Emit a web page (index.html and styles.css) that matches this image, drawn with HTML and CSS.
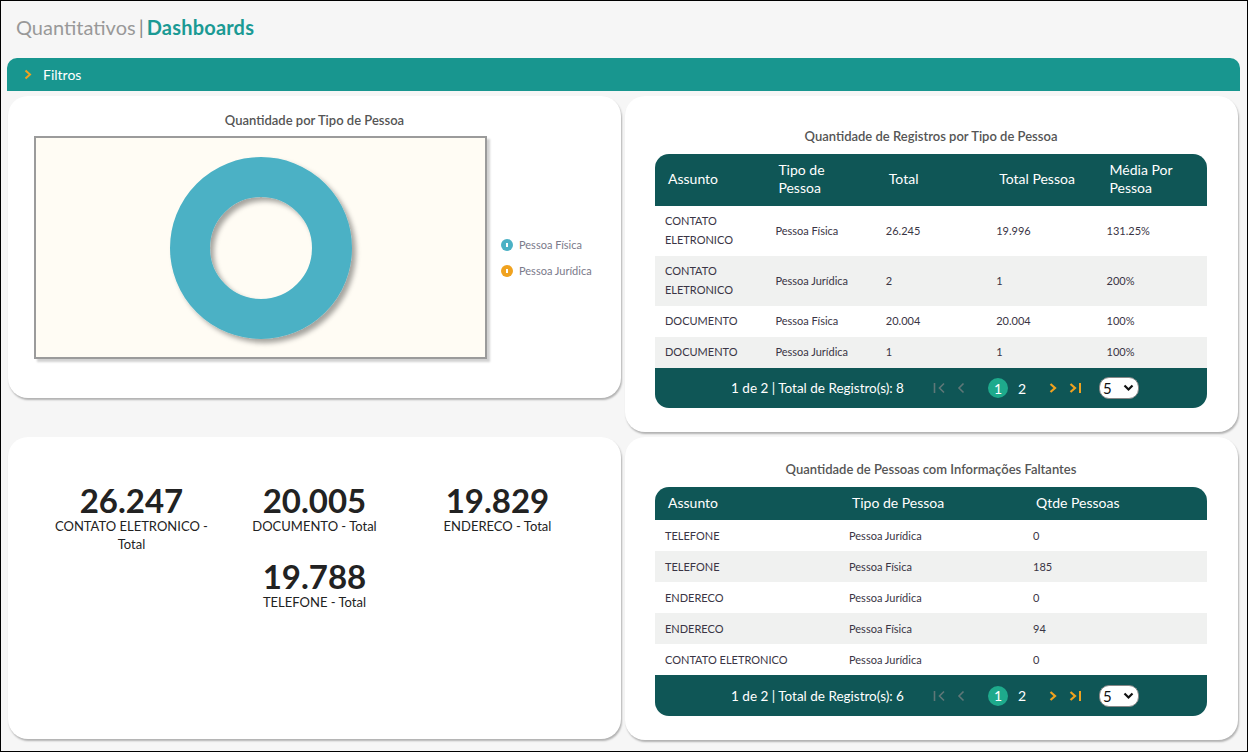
FILE: index.html
```html
<!DOCTYPE html>
<html lang="pt-BR">
<head>
<meta charset="utf-8">
<title>Quantitativos | Dashboards</title>
<link rel="stylesheet" href="styles.css">
</head>
<body>
<div class="frame">
  <h1 class="page-title"><span class="pt-muted">Quantitativos</span><span class="pt-sep">|</span><span class="pt-strong">Dashboards</span></h1>
  <div class="filter-bar">
    <svg class="filter-chevron" width="8" height="11" viewBox="0 0 8 11"><path d="M1.5 1.5 L6 5.5 L1.5 9.5" fill="none" stroke="#f0a21f" stroke-width="2"/></svg>
    <span class="filter-label">Filtros</span>
  </div>

  <div class="grid">
    <section class="card card-chart">
      <h2 class="card-title">Quantidade por Tipo de Pessoa</h2>
      <div class="chart-row">
        <div class="chart-box">
          <svg class="donut" width="220" height="220" viewBox="0 0 220 220">
            <defs>
              <filter id="sh" x="-20%" y="-20%" width="150%" height="150%">
                <feDropShadow dx="4" dy="4" stdDeviation="2.5" flood-color="#000" flood-opacity="0.35"/>
              </filter>
            </defs>
            <circle cx="110" cy="110" r="71" fill="none" stroke="#4bb1c5" stroke-width="40" filter="url(#sh)"/>
          </svg>
        </div>
        <ul class="legend">
          <li class="legend-item"><svg width="12" height="12" viewBox="0 0 12 12"><circle cx="6" cy="6" r="6" fill="#4bb1c5"/><rect x="5" y="4" width="2" height="4" fill="#fff"/></svg><span>Pessoa Física</span></li>
          <li class="legend-item"><svg width="12" height="12" viewBox="0 0 12 12"><circle cx="6" cy="6" r="6" fill="#f0a21f"/><rect x="5" y="4" width="2" height="4" fill="#fff"/></svg><span>Pessoa Jurídica</span></li>
        </ul>
      </div>
    </section>

    <section class="card card-table card-t1">
      <h2 class="card-title">Quantidade de Registros por Tipo de Pessoa</h2>
      <div class="table-wrap">
        <table class="data">
          <thead>
            <tr><th>Assunto</th><th>Tipo de Pessoa</th><th>Total</th><th>Total Pessoa</th><th>Média Por Pessoa</th></tr>
          </thead>
          <tbody>
            <tr><td>CONTATO ELETRONICO</td><td>Pessoa Física</td><td>26.245</td><td>19.996</td><td>131.25%</td></tr>
            <tr class="alt"><td>CONTATO ELETRONICO</td><td>Pessoa Jurídica</td><td>2</td><td>1</td><td>200%</td></tr>
            <tr><td>DOCUMENTO</td><td>Pessoa Física</td><td>20.004</td><td>20.004</td><td>100%</td></tr>
            <tr class="alt"><td>DOCUMENTO</td><td>Pessoa Jurídica</td><td>1</td><td>1</td><td>100%</td></tr>
          </tbody>
        </table>
        <div class="pager">
          <span class="pager-info">1 de 2 | Total de Registro(s): 8</span>
          <span class="pager-nav">
            <svg class="pg-ico" width="13" height="12" viewBox="0 0 13 12"><path d="M1.5 1 V11 M11 1.5 L6.5 6 L11 10.5" fill="none" stroke="#5f7777" stroke-width="1.6"/></svg>
            <svg class="pg-ico pg-prev" width="8" height="12" viewBox="0 0 8 12"><path d="M6.5 1.5 L2 6 L6.5 10.5" fill="none" stroke="#5f7777" stroke-width="1.6"/></svg>
            <span class="pg-num pg-active">1</span>
            <span class="pg-num">2</span>
            <svg class="pg-ico pg-next" width="8" height="12" viewBox="0 0 8 12"><path d="M1.5 2 L6 6 L1.5 10" fill="none" stroke="#f0a21f" stroke-width="2.2"/></svg>
            <svg class="pg-ico" width="13" height="12" viewBox="0 0 13 12"><path d="M1.5 2 L6 6 L1.5 10" fill="none" stroke="#f0a21f" stroke-width="2.2"/><path d="M11 1 V11" fill="none" stroke="#f0a21f" stroke-width="2"/></svg>
            <span class="pg-select">5<svg width="11" height="8" viewBox="0 0 11 8"><path d="M1.5 1.5 L5.5 5.5 L9.5 1.5" fill="none" stroke="#111" stroke-width="2.2"/></svg></span>
          </span>
        </div>
      </div>
    </section>

    <section class="card card-numbers">
      <div class="kpis">
        <div class="kpi"><div class="kpi-value">26.247</div><div class="kpi-label">CONTATO ELETRONICO - Total</div></div>
        <div class="kpi"><div class="kpi-value">20.005</div><div class="kpi-label">DOCUMENTO - Total</div></div>
        <div class="kpi"><div class="kpi-value">19.829</div><div class="kpi-label">ENDERECO - Total</div></div>
        <div class="kpi"><div class="kpi-value">19.788</div><div class="kpi-label">TELEFONE - Total</div></div>
      </div>
    </section>

    <section class="card card-table card-t2">
      <h2 class="card-title">Quantidade de Pessoas com Informações Faltantes</h2>
      <div class="table-wrap">
        <table class="data data-3">
          <thead>
            <tr><th>Assunto</th><th>Tipo de Pessoa</th><th>Qtde Pessoas</th></tr>
          </thead>
          <tbody>
            <tr><td>TELEFONE</td><td>Pessoa Jurídica</td><td>0</td></tr>
            <tr class="alt"><td>TELEFONE</td><td>Pessoa Física</td><td>185</td></tr>
            <tr><td>ENDERECO</td><td>Pessoa Jurídica</td><td>0</td></tr>
            <tr class="alt"><td>ENDERECO</td><td>Pessoa Física</td><td>94</td></tr>
            <tr><td>CONTATO ELETRONICO</td><td>Pessoa Jurídica</td><td>0</td></tr>
          </tbody>
        </table>
        <div class="pager pager-2">
          <span class="pager-info">1 de 2 | Total de Registro(s): 6</span>
          <span class="pager-nav">
            <svg class="pg-ico" width="13" height="12" viewBox="0 0 13 12"><path d="M1.5 1 V11 M11 1.5 L6.5 6 L11 10.5" fill="none" stroke="#5f7777" stroke-width="1.6"/></svg>
            <svg class="pg-ico pg-prev" width="8" height="12" viewBox="0 0 8 12"><path d="M6.5 1.5 L2 6 L6.5 10.5" fill="none" stroke="#5f7777" stroke-width="1.6"/></svg>
            <span class="pg-num pg-active">1</span>
            <span class="pg-num">2</span>
            <svg class="pg-ico pg-next" width="8" height="12" viewBox="0 0 8 12"><path d="M1.5 2 L6 6 L1.5 10" fill="none" stroke="#f0a21f" stroke-width="2.2"/></svg>
            <svg class="pg-ico" width="13" height="12" viewBox="0 0 13 12"><path d="M1.5 2 L6 6 L1.5 10" fill="none" stroke="#f0a21f" stroke-width="2.2"/><path d="M11 1 V11" fill="none" stroke="#f0a21f" stroke-width="2"/></svg>
            <span class="pg-select">5<svg width="11" height="8" viewBox="0 0 11 8"><path d="M1.5 1.5 L5.5 5.5 L9.5 1.5" fill="none" stroke="#111" stroke-width="2.2"/></svg></span>
          </span>
        </div>
      </div>
    </section>
  </div>
</div>
</body>
</html>
```

FILE: styles.css
```css
* { box-sizing: border-box; }
html, body { margin: 0; padding: 0; }
body {
  font-family: Lato, "Noto Sans", "Liberation Sans", sans-serif;
  color: #333;
  background: #fff;
}
.frame {
  width: 1248px;
  height: 752px;
  border: 1px solid #000;
  background: #f6f6f6;
  padding: 0 7px 0 6px;
  overflow: hidden;
}
.page-title {
  margin: 0;
  padding: 14px 0 0 9px;
  height: 57px;
  font-size: 20px;
  line-height: 24px;
  font-weight: 400;
}
.pt-muted { color: #999; }
.pt-sep { color: #888; margin: 0 3px 0 3px; }
.pt-strong { color: #1b9a94; font-weight: 700; letter-spacing: 0.2px; }

.filter-bar {
  height: 33px;
  background: #18968f;
  border-radius: 10px 10px 0 0;
  display: flex;
  align-items: center;
  padding-left: 17px;
  padding-bottom: 1px;
  color: #fff;
  font-size: 14px;
}
.filter-chevron { margin-right: 11px; }

.grid {
  margin: 5px 0 0 1px;
  width: 1230px;
  display: grid;
  grid-template-columns: 613px 613px;
  column-gap: 4px;
  row-gap: 5px;
  align-items: start;
}
.card {
  background: #fff;
  border-radius: 20px;
  box-shadow: 1px 2px 2px rgba(0,0,0,0.28);
}
.card-title {
  margin: 0;
  text-align: center;
  font-size: 13px;
  line-height: 18px;
  font-weight: 600;
  color: #555;
}

/* chart card */
.card-chart {
  height: 302px;
  padding: 15px 0 0 26px;
}
.card-chart .card-title { margin-left: -26px; margin-bottom: 7px; }
.chart-row { display: flex; align-items: center; }
.chart-box {
  width: 453px;
  height: 223px;
  border: 2px solid #9b9b9b;
  background: #fffcf4;
  box-shadow: 3px 3px 2px rgba(0,0,0,0.18);
  display: flex;
  align-items: center;
  justify-content: center;
}
.legend {
  list-style: none;
  margin: 20px 0 0 14px;
  padding: 0;
}
.legend-item {
  display: flex;
  align-items: center;
  gap: 6px;
  height: 26px;
  font-size: 11px;
  color: #7a7a8a;
}

/* table cards */
.card-t1 { padding: 31px 31px 24px 30px; }
.card-t2 { padding: 23px 31px 24px 30px; align-self: stretch; }
.card-table .card-title { margin-bottom: 9px; }
.table-wrap {
  border-radius: 14px;
  overflow: hidden;
  background: #fff;
}
.data {
  width: 552px;
  border-collapse: collapse;
  table-layout: fixed;
}
.data th {
  background: #0f5656;
  color: #fff;
  font-weight: 400;
  font-size: 14px;
  line-height: 18px;
  text-align: left;
  padding: 7px 10px 9px 13px;
  vertical-align: middle;
}
.data td {
  font-size: 11px;
  line-height: 19px;
  color: #3a3545;
  padding: 5px 10px 7px 10px;
  vertical-align: middle;
}
.data tr.alt td { background: #f0f1f0; }
.data-3 th { padding: 7px 10px 8px 13px; }
.data-3 td { padding: 6px 10px 6px 10px; }

.pager {
  height: 40px;
  background: #0f5656;
  display: flex;
  align-items: center;
  justify-content: center;
  color: #fff;
  font-size: 13.5px;
  padding-left: 8px;
}
.pager-2 { height: 41px; }
.pager-info { margin-right: 29px; }
.pager-nav { display: flex; align-items: center; }
.pg-prev { margin-left: 11px; margin-right: 23px; }
.pg-num {
  width: 20px;
  height: 20px;
  display: inline-flex;
  align-items: center;
  justify-content: center;
  font-size: 14px;
  border-radius: 50%;
}
.pg-active { background: #1eaa8c; margin-right: 4px; }
.pg-next { margin-left: 17px; margin-right: 12px; }
.pg-select {
  margin-left: 17px;
  width: 40px;
  height: 22px;
  background: #fff;
  border: 1px solid #888;
  border-radius: 10px;
  color: #111;
  font-size: 15px;
  display: inline-flex;
  align-items: center;
  justify-content: space-between;
  padding: 0 4px 0 3px;
}

/* numbers card */
.card-numbers {
  align-self: stretch;
  height: 302px;
  padding: 46px 30px 0 30px;
}
.kpis {
  display: flex;
  flex-wrap: wrap;
  justify-content: center;
  column-gap: 13px;
  row-gap: 6px;
}
.kpi {
  width: 170px;
  text-align: center;
}
.kpi-value {
  font-size: 33px;
  line-height: 34px;
  font-weight: 700;
  color: #222;
}
.kpi-label {
  font-size: 13px;
  line-height: 18px;
  color: #222;
}
```
